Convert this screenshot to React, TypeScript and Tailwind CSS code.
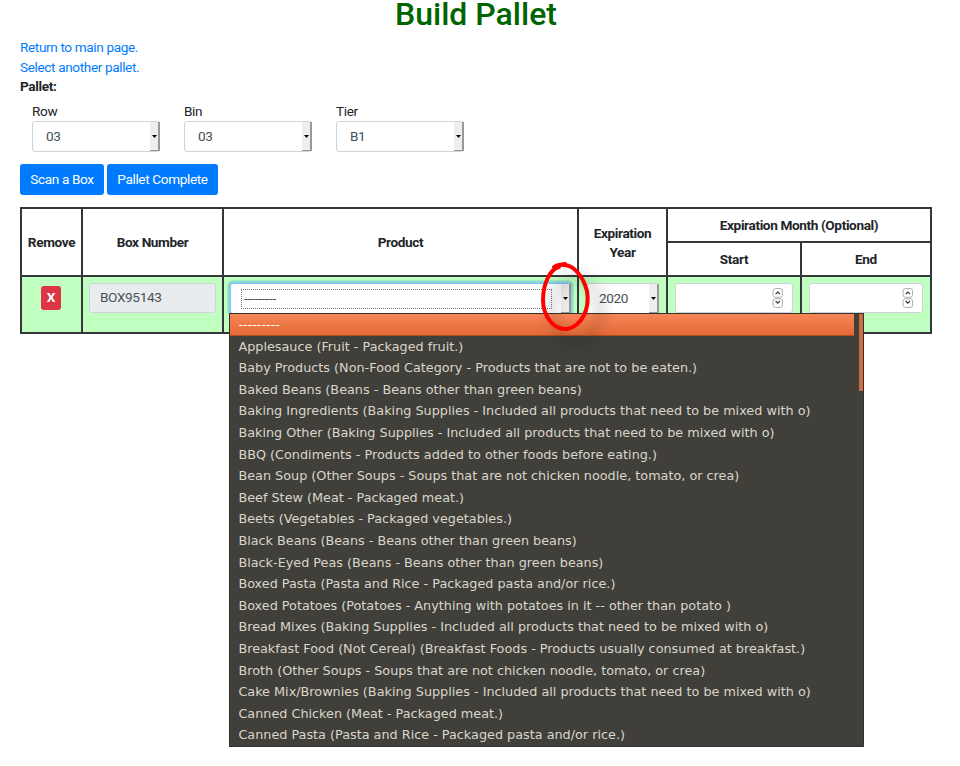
import React from "react";

const options = [
  "Applesauce (Fruit - Packaged fruit.)",
  "Baby Products (Non-Food Category - Products that are not to be eaten.)",
  "Baked Beans (Beans - Beans other than green beans)",
  "Baking Ingredients (Baking Supplies - Included all products that need to be mixed with o)",
  "Baking Other (Baking Supplies - Included all products that need to be mixed with o)",
  "BBQ (Condiments - Products added to other foods before eating.)",
  "Bean Soup (Other Soups - Soups that are not chicken noodle, tomato, or crea)",
  "Beef Stew (Meat - Packaged meat.)",
  "Beets (Vegetables - Packaged vegetables.)",
  "Black Beans (Beans - Beans other than green beans)",
  "Black-Eyed Peas (Beans - Beans other than green beans)",
  "Boxed Pasta (Pasta and Rice - Packaged pasta and/or rice.)",
  "Boxed Potatoes (Potatoes - Anything with potatoes in it -- other than potato )",
  "Bread Mixes (Baking Supplies - Included all products that need to be mixed with o)",
  "Breakfast Food (Not Cereal) (Breakfast Foods - Products usually consumed at breakfast.)",
  "Broth (Other Soups - Soups that are not chicken noodle, tomato, or crea)",
  "Cake Mix/Brownies (Baking Supplies - Included all products that need to be mixed with o)",
  "Canned Chicken (Meat - Packaged meat.)",
  "Canned Pasta (Pasta and Rice - Packaged pasta and/or rice.)",
];

function Arrow() {
  return (
    <span className="-mr-px flex h-full w-[10px] shrink-0 items-center justify-end border-r-2 border-b border-[#999] bg-[#f0eeed] pr-px">
      <svg width="5" height="3" viewBox="0 0 5 3"><path d="M0 0H5L2.5 3Z" fill="#000" /></svg>
    </span>
  );
}

function Field({ label, value }: { label: string; value: string }) {
  return (
    <div className="w-[152px] px-3">
      <div className="h-[19px]">{label}</div>
      <div className="flex h-[31px] items-center justify-between rounded-[3px] border border-[#ced4da] pl-[13px] text-[#495057]">
        <span>{value}</span>
        <Arrow />
      </div>
    </div>
  );
}

function Spinner() {
  return (
    <svg width="12" height="20" viewBox="0 0 12 20" fill="none" stroke="#b0b0b0">
      <rect x="1" y="0.5" width="9.5" height="8.8" rx="2.5" />
      <rect x="1" y="10.7" width="9.5" height="8.8" rx="2.5" />
      <path d="M3.6 6.2L5.8 4L8 6.2M3.6 13L5.8 15.2L8 13" stroke="#333" strokeWidth="1.1" />
    </svg>
  );
}

const th = "flex items-center justify-center text-center font-bold bg-white pt-[2px]";
const td = "bg-[#c1ffc1] pt-[6px]";

export default function App() {
  return (
    <div className="relative h-[766px] w-[960px] overflow-hidden bg-white px-5 font-['Roboto',sans-serif] text-[13.6px] leading-[19.2px] tracking-[-0.37px] text-[#212529]">
      <h1 className="h-[38.4px] text-center text-[32px] leading-[28px] font-medium tracking-normal text-[#006400]"><span className="mr-[8px]">Build Pallet</span></h1>
      <div className="text-[#007bff]"><a>Return to main page.</a></div>
      <div className="text-[#007bff]"><a>Select another pallet.</a></div>
      <div className="font-bold">Pallet:</div>
      <div className="mt-[6px] flex">
        <Field label="Row" value="03" />
        <Field label="Bin" value="03" />
        <Field label="Tier" value="B1" />
      </div>
      <div className="mt-[12px] flex gap-[3px] text-white">
        <button className="h-[31px] w-[84px] rounded-[3px] bg-[#007bff]">Scan a Box</button>
        <button className="h-[31px] w-[111px] rounded-[3px] bg-[#007bff]">Pallet Complete</button>
      </div>

      <div className="mt-[12px] grid h-[127px] w-[912px] grid-cols-[59px_139px_353px_87px_132px_128px] grid-rows-[32px_32px_55px] gap-[2px] bg-[#34383c] p-[2px]">
        <div className={th + " row-span-2"}>Remove</div>
        <div className={th + " row-span-2"}>Box Number</div>
        <div className={th + " row-span-2"}>Product</div>
        <div className={th + " row-span-2"}>Expiration<br />Year</div>
        <div className={th + " col-span-2"}>Expiration Month (Optional)</div>
        <div className={th}>Start</div>
        <div className={th}>End</div>
        <div className={td + " flex justify-center pr-px"}>
          <span className="mt-[3px] flex h-6 w-5 items-center justify-center rounded-[3px] bg-[#dc3545] font-bold text-white">X</span>
        </div>
        <div className={td + " px-[6px]"}>
          <div className="flex h-[30px] items-center rounded-[3px] border border-[#ced4da] bg-[#e9ecef] pl-[10px] text-[#495057]">BOX95143</div>
        </div>
        <div className={td + " px-[6px]"}>
          <div className="flex h-[31px] items-center justify-between rounded-[3px] border border-[#80bdff] bg-white pl-[10px] text-[#495057] shadow-[0_0_0_2.5px_rgba(0,123,255,0.28)]">
            <div className="flex h-[20px] w-[311px] items-center border border-dotted border-[#777] pl-[2px] tracking-[-0.2px]">---------</div>
            <Arrow />
          </div>
        </div>
        <div className={td + " px-[7px]"}>
          <div className="flex h-[31px] items-center justify-between rounded-[3px] border border-[#ced4da] bg-white pl-[12px] text-[#495057]">2020<Arrow /></div>
        </div>
        <div className={td + " px-[7px]"}>
          <div className="flex h-[30px] items-center justify-end rounded-[3px] border border-[#ced4da] bg-white pr-[8px]"><Spinner /></div>
        </div>
        <div className={td + " px-[7px]"}>
          <div className="flex h-[30px] items-center justify-end rounded-[3px] border border-[#ced4da] bg-white pr-[8px]"><Spinner /></div>
        </div>
      </div>

      <div className="absolute top-[313px] left-[229px] flex h-[434px] w-[635px] border border-[#33322e] bg-[#403f3a] font-['DejaVu_Sans',sans-serif] text-[12.8px] leading-[21.6px] tracking-normal text-[#d9d6ca]">
        <div className="w-[624px] whitespace-pre">
          <div className="h-[21.6px] border-b border-[#b34e26] bg-linear-to-b from-[#f78657] to-[#e36936] pl-[8.4px] text-white">---------</div>
          {options.map((o) => <div key={o} className="h-[21.6px] pl-[8.4px]">{o}</div>)}
        </div>
        <div className="ml-[5px] h-[77px] w-1 bg-[#cd6a42]" />
      </div>

      <svg className="absolute top-[245px] left-[520px]" width="120" height="110" viewBox="520 245 120 110" fill="none">
        <defs><filter id="soft" x="-50%" y="-50%" width="200%" height="200%"><feGaussianBlur stdDeviation="7" /></filter></defs>
        <ellipse cx="576" cy="310" rx="24" ry="32" stroke="#000" strokeOpacity="0.2" strokeWidth="7" filter="url(#soft)" />
        <path d="M554 267C558 264 562 265 565 264M563 265C573 264 583 276 587 291C590 309 582 326 567 329C552 330 543 314 543 300C543 284 550 269 559 267" stroke="#f00" strokeWidth="4" strokeLinecap="round" strokeLinejoin="round" />
      </svg>
    </div>
  );
}
